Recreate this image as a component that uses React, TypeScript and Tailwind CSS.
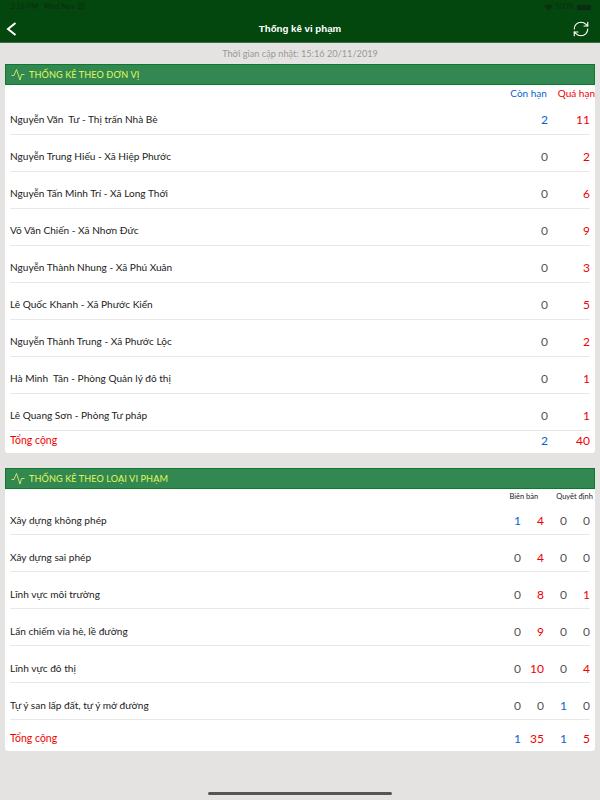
import { RefreshCw, Wifi } from "lucide-react";

const unitRows: [string, number, number][] = [
  ["Nguyễn Văn  Tư - Thị trấn Nhà Bè", 2, 11],
  ["Nguyễn Trung Hiếu - Xã Hiệp Phước", 0, 2],
  ["Nguyễn Tấn Minh Trí - Xã Long Thới", 0, 6],
  ["Võ Văn Chiến - Xã Nhơn Đức", 0, 9],
  ["Nguyễn Thành Nhung - Xã Phú Xuân", 0, 3],
  ["Lê Quốc Khanh - Xã Phước Kiển", 0, 5],
  ["Nguyễn Thành Trung - Xã Phước Lộc", 0, 2],
  ["Hà Minh  Tân - Phòng Quản lý đô thị", 0, 1],
  ["Lê Quang Sơn - Phòng Tư pháp", 0, 1],
];

const typeRows: [string, number, number, number, number][] = [
  ["Xây dựng không phép", 1, 4, 0, 0],
  ["Xây dựng sai phép", 0, 4, 0, 0],
  ["Lĩnh vực môi trường", 0, 8, 0, 1],
  ["Lấn chiếm vỉa hè, lề đường", 0, 9, 0, 0],
  ["Lĩnh vực đô thị", 0, 10, 0, 4],
  ["Tự ý san lấp đất, tự ý mở đường", 0, 0, 1, 0],
];

function colorOf(n: number, kind: "blue" | "red") {
  if (n === 0) return "text-[#555555]";
  return kind === "blue" ? "text-[#0a5fd0]" : "text-[#f00000]";
}

function SectionHeader({ title }: { title: string }) {
  return (
    <div className="flex h-[21px] items-center border border-[#0b7a2c] bg-[#338751] pl-[5px]">
      <svg viewBox="0 0 14 14" className="h-[14px] w-[14px]" fill="none" stroke="#d3f06a" strokeWidth="0.9">
        <path d="M0.5 7.5H3L5.5 1.5L9 12L10.5 6.5H13.5" />
      </svg>
      <span className="ml-[4px] text-[9.1px] font-medium tracking-[0.1px] text-[#d9f25c]">{title}</span>
    </div>
  );
}

function Cell({ n, kind, className }: { n: number; kind: "blue" | "red"; className: string }) {
  return <span className={`${className} text-right text-[12px] ${colorOf(n, kind)}`}>{n}</span>;
}

export default function App() {
  return (
    <div className="flex h-[800px] w-[600px] flex-col overflow-hidden bg-[#e4e3e1] font-['Lato',sans-serif] text-[#222222]">
      <header className="h-[43px] shrink-0 border-b border-[#3f6b47] bg-[#03470f]">
        <div className="flex h-[14px] items-center justify-between pl-[10px] pr-[9px] text-[7.5px] text-[#0d2a12]">
          <span>3:16 PM&nbsp;&nbsp;&nbsp;Wed Nov 20</span>
          <span className="flex items-center gap-[2px]">
            <Wifi size={9} strokeWidth={3} />
            100%
            <span className="ml-[1px] h-[5px] w-[14px] rounded-[1px] bg-[#0d2a12]" />
          </span>
        </div>
        <div className="flex h-[28px] items-center justify-between pl-[6px] pr-[10px] pt-[2px]">
          <div className="w-[22px]">
            <svg viewBox="0 0 11 14" className="h-[14px] w-[11px]" fill="none" stroke="white" strokeWidth="2">
              <path d="M9.5 1L2 7L9.5 13" />
            </svg>
          </div>
          <span className="font-['Liberation_Sans',sans-serif] text-[9.7px] font-bold text-white">Thống kê vi phạm</span>
          <RefreshCw size={18} strokeWidth={1.5} className="text-white" />
        </div>
      </header>

      <div className="flex h-[21px] shrink-0 items-center justify-center text-[9.2px] text-[#999999]">
        Thời gian cập nhật: 15:16 20/11/2019
      </div>

      <section className="mx-[5px] rounded-b-[3px] bg-white">
        <SectionHeader title="THỐNG KÊ THEO ĐƠN VỊ" />
        <div className="flex h-[13px] justify-end gap-[11px] pt-[3px] text-[10px] leading-none whitespace-nowrap">
          <span className="text-[#0a5fd0]">Còn hạn</span>
          <span className="text-[#f00000]">Quá hạn</span>
        </div>
        <ul className="px-[5px]">
          {unitRows.map(([name, a, b], i) => (
            <li key={i} className="flex h-[37px] items-center border-b border-[#e8e8e8] pt-[8px] text-[10.1px]">
              <span className="flex-1 whitespace-pre">{name}</span>
              <Cell n={a} kind="blue" className="w-[20px]" />
              <Cell n={b} kind="red" className="ml-[18px] w-[24px]" />
            </li>
          ))}
          <li className="flex h-[22px] items-center pb-[2px] text-[10.5px]">
            <span className="flex-1 text-[#f00000]">Tổng cộng</span>
            <Cell n={2} kind="blue" className="w-[20px]" />
            <Cell n={40} kind="red" className="ml-[18px] w-[24px]" />
          </li>
        </ul>
      </section>

      <section className="mx-[5px] mt-[15px] rounded-b-[3px] bg-white">
        <SectionHeader title="THỐNG KÊ THEO LOẠI VI PHẠM" />
        <div className="flex h-[9px] justify-end pr-[2px] pt-[4px] text-[7.5px] leading-none whitespace-nowrap">
          <span>Biên bản</span>
          <span className="ml-[18px]">Quyết định</span>
        </div>
        <ul className="px-[5px]">
          {typeRows.map(([name, a, b, c, d], i) => (
            <li key={i} className="flex h-[37px] items-center border-b border-[#e8e8e8] pt-[9px] text-[10.1px]">
              <span className="flex-1">{name}</span>
              <Cell n={a} kind="blue" className="w-[16px]" />
              <Cell n={b} kind="red" className="ml-[7px] w-[16px]" />
              <Cell n={c} kind="blue" className="ml-[7px] w-[16px]" />
              <Cell n={d} kind="red" className="ml-[7px] w-[16px]" />
            </li>
          ))}
          <li className="flex h-[31px] items-center pt-[6px] text-[10.5px]">
            <span className="flex-1 text-[#f00000]">Tổng cộng</span>
            <Cell n={1} kind="blue" className="w-[16px]" />
            <Cell n={35} kind="red" className="ml-[7px] w-[16px]" />
            <Cell n={1} kind="blue" className="ml-[7px] w-[16px]" />
            <Cell n={5} kind="red" className="ml-[7px] w-[16px]" />
          </li>
        </ul>
      </section>

      <div className="mt-auto mb-[5px] flex justify-center">
        <div className="h-[3px] w-[184px] rounded-full bg-[#555555]" />
      </div>
    </div>
  );
}
